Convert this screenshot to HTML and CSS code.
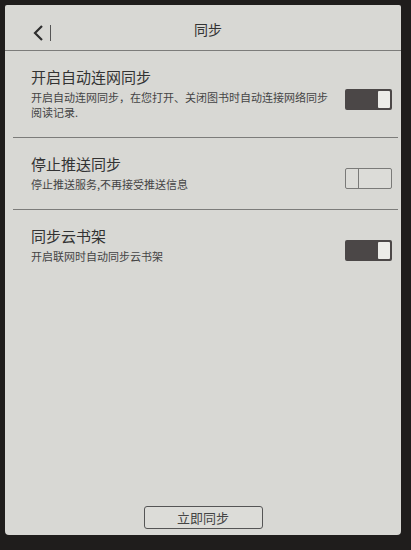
FILE: index.html
```html
<!DOCTYPE html>
<html lang="zh">
<head>
<meta charset="utf-8">
<title>同步</title>
<link rel="stylesheet" href="styles.css">
</head>
<body>
<div class="screen">
  <header class="header">
    <div class="back">
      <svg width="14" height="18" viewBox="0 0 14 18"><path d="M10 2 L3 9 L10 16" fill="none" stroke="#2e2e2e" stroke-width="2.2"/></svg>
      <span class="bar"></span>
    </div>
    <div class="title">同步</div>
  </header>
  <div class="list">
    <div class="item">
      <div class="text">
        <div class="item-title">开启自动连网同步</div>
        <div class="item-sub">开启自动连网同步，在您打开、关闭图书时自动连接网络同步阅读记录.</div>
      </div>
      <div class="toggle on"><span class="knob"></span></div>
    </div>
    <div class="item">
      <div class="text">
        <div class="item-title">停止推送同步</div>
        <div class="item-sub">停止推送服务,不再接受推送信息</div>
      </div>
      <div class="toggle off"><span class="knob"></span></div>
    </div>
    <div class="item last">
      <div class="text">
        <div class="item-title">同步云书架</div>
        <div class="item-sub">开启联网时自动同步云书架</div>
      </div>
      <div class="toggle on"><span class="knob"></span></div>
    </div>
  </div>
  <footer class="footer">
    <button class="sync-btn">立即同步</button>
  </footer>
</div>
</body>
</html>
```
FILE: styles.css
```css
html, body {
  margin: 0;
  padding: 0;
}
body {
  background: #1f1d1c;
  width: 411px;
  height: 550px;
  padding: 5px 10px 15px 5px;
  box-sizing: border-box;
  font-family: "Noto Sans CJK SC", "Noto Sans", sans-serif;
  color: #333;
}
.screen {
  width: 396px;
  height: 530px;
  background: #d8d8d4;
  border-radius: 2px 2px 4px 4px;
  display: flex;
  flex-direction: column;
  box-sizing: border-box;
}
.header {
  height: 45px;
  position: relative;
  display: flex;
  align-items: center;
  justify-content: center;
  border-bottom: 1px solid #7c7c7a;
}
.back {
  position: absolute;
  left: 27px;
  top: 19px;
  display: flex;
  align-items: center;
  gap: 4px;
}
.bar {
  width: 1px;
  height: 16px;
  background: #555;
}
.title {
  font-size: 14px;
  color: #333;
  margin-left: 10px;
  margin-top: 2px;
}
.list {
  display: flex;
  flex-direction: column;
}
.item {
  display: flex;
  align-items: center;
  padding: 15px 6px 17px 18px;
  margin: 0 3px 0 8px;
  border-bottom: 1px solid #7c7c7a;
}
.item.last {
  border-bottom: none;
}
.text {
  flex: 1;
}
.item-title {
  font-size: 15px;
  line-height: 22px;
  color: #333;
}
.item-sub {
  font-size: 11px;
  line-height: 15px;
  margin-top: 2px;
  color: #444;
  width: 300px;
}
.toggle {
  width: 47px;
  height: 21px;
  box-sizing: border-box;
  border-radius: 2px;
  display: flex;
  margin-top: 12px;
  margin-left: 6px;
  flex-shrink: 0;
}
.toggle.on {
  background: #4b4747;
  border: 2px solid #4b4747;
  justify-content: flex-end;
}
.toggle.on .knob {
  width: 12px;
  height: 100%;
  background: #ecece8;
  border-radius: 1px;
}
.toggle.off {
  background: #dcdcd8;
  border: 1px solid #7a7a78;
  justify-content: flex-start;
}
.toggle.off .knob {
  width: 13px;
  height: 100%;
  border-right: 1px solid #7a7a78;
  box-sizing: border-box;
}
.footer {
  margin-top: auto;
  display: flex;
  justify-content: center;
  padding-bottom: 6px;
}
.sync-btn {
  width: 119px;
  height: 23px;
  border: 1.5px solid #555;
  border-radius: 3px;
  background: #dcdcd8;
  font-family: "Noto Sans CJK SC", "Noto Sans", sans-serif;
  font-size: 13px;
  color: #444;
  padding: 0;
  line-height: 20px;
}
```
